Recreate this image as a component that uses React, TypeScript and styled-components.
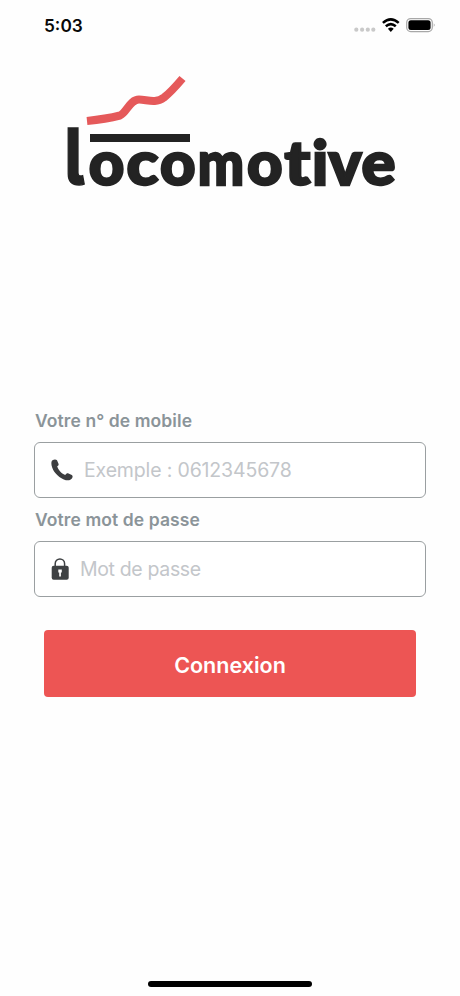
import React from "react";
import styled, { createGlobalStyle } from "styled-components";

const GlobalStyle = createGlobalStyle`
  * { box-sizing: border-box; }
  body { margin: 0; background: #fefefe; font-family: Inter, "Liberation Sans", sans-serif; }
`;

const Screen = styled.main`
  display: flex;
  flex-direction: column;
  width: 460px;
  height: 996px;
  background: #fefefe;
  overflow: hidden;
`;

const StatusBar = styled.header`
  display: flex;
  justify-content: space-between;
  align-items: center;
  height: 50px;
  padding: 0 24px 0 44px;
`;

const Clock = styled.time`
  padding-top: 1px;
  font-size: 17.3px;
  font-weight: 600;
  color: #080808;
`;

const Brand = styled.div`
  height: 170px;
  svg { display: block; }
`;

const Letter = styled.text`
  font-family: Lato, sans-serif;
  font-weight: 900;
  font-size: 61px;
  fill: #232323;
  stroke: #232323;
`;

const TallLetter = styled(Letter)`
  font-family: Inter, sans-serif;
  font-weight: 700;
  font-size: 78px;
  font-feature-settings: "cv05" 1;
`;

const Form = styled.form`
  display: flex;
  flex-direction: column;
  margin-top: 186px;
  padding: 0 34px;
`;

const Label = styled.label`
  height: 30px;
  margin-left: 1px;
  line-height: 30px;
  font-size: 17.5px;
  font-weight: 600;
  letter-spacing: 0.09px;
  color: #8b9499;
  white-space: nowrap;
`;

const Field = styled.div<{ $gap: number }>`
  display: flex;
  align-items: center;
  gap: ${(p) => p.$gap}px;
  height: 56px;
  margin: 6px 0 7px;
  padding-left: 16px;
  border: 1px solid #9a9fa1;
  border-radius: 6px;
  background: #fff;
  svg { flex: none; }
`;

const Input = styled.input<{ $spacing: number }>`
  flex: 1;
  min-width: 0;
  height: 40px;
  padding: 0;
  border: 0;
  outline: 0;
  background: transparent;
  font: 400 19.5px Inter, sans-serif;
  letter-spacing: ${(p) => p.$spacing}px;
  &::placeholder { color: #c3c6ca; opacity: 1; }
`;

const Submit = styled.button`
  height: 67px;
  margin: 26px 10px 0;
  padding: 2px 0 0;
  border: 0;
  border-radius: 4px;
  background: #ed5554;
  color: #fff;
  font: 600 21.5px Inter, sans-serif;
`;

const HomeIndicator = styled.div`
  width: 164px;
  height: 6px;
  margin: auto auto 9px 148px;
  border-radius: 3px;
  background: #000;
`;

function StatusIcons() {
  return (
    <svg width="84" height="20" viewBox="351 15 84 20">
      <g fill="#c9c9c9">
        <circle cx="355.300" cy="29.700" r="2.100" />
        <circle cx="361.100" cy="29.700" r="2.100" />
        <circle cx="366.800" cy="29.700" r="2.100" />
        <circle cx="372.300" cy="29.700" r="2.100" />
      </g>
      <g fill="none" stroke="#000" strokeWidth="2.500">
        <path d="M381.900 22.900Q389.800 15.800 397.700 22.900" />
        <path d="M384.800 26.300Q389.800 22 394.800 26.300" />
      </g>
      <path d="M386.900 28.700Q389.800 26.400 392.700 28.700L389.800 31.900Z" />
      <rect x="405.700" y="18.600" width="25.600" height="13" rx="4" fill="none" stroke="#a8a8a8" strokeWidth="1.200" />
      <rect x="407.400" y="20.300" width="22.200" height="9.600" rx="2.500" />
      <path d="M432.800 23.300q1.800 1.800 0 3.800z" fill="#9b9b9b" />
    </svg>
  );
}

const letters = [
  { char: "o", x: 88.8, width: 1.01 },
  { char: "c", x: 126.6, width: 1.08 },
  { char: "o", x: 160, width: 1.01 },
  { char: "m", x: 197.8, width: 0.9 },
  { char: "o", x: 247, width: 1.01 },
  { char: "t", x: 284.6, width: 1.12 },
  { char: "i", x: 312, width: 1.02 },
  { char: "v", x: 328.6, width: 1.02 },
  { char: "e", x: 361.6, width: 1.04 },
];

function Logo() {
  return (
    <svg width="460" height="170" viewBox="0 50 460 170" role="img" aria-label="locomotive">
      <path
        d="M87 121Q106 119 120 115.500C127 112 130 99.500 139 99.500C147 99.500 155 104 164 97.500C171 92 177 85 182.500 78.500"
        fill="none"
        stroke="#e5595a"
        strokeWidth="8"
      />
      <path d="M90 138H190" stroke="#232323" strokeWidth="8" />
      <TallLetter transform="translate(64 184.800) scale(.86 1)" strokeWidth="1.400">l</TallLetter>
      {letters.map(({ char, x, width }, i) => (
        <Letter key={i} transform={`translate(${x} 184.900) scale(${width} 1)`} strokeWidth="2.400">
          {char}
        </Letter>
      ))}
    </svg>
  );
}

function PhoneIcon() {
  return (
    <svg width="22" height="22" viewBox="0 0 22 22" fill="#3c3d3f">
      <path d="M1.500 1.200C3 .2 5.200.2 6 1.300L7.500 4.800C7.900 5.900 7.500 6.600 6.200 7.300C7 10.700 10.200 14.600 14.200 15.900C15.300 14.500 16.300 14 17.500 14.500L20.800 16C22 16.800 21.800 18.300 20.900 19.500C18.800 21.900 15.900 21.700 12.800 20.400C6.600 17.700 1.700 12.200 .6 6.500C.2 4 .3 2 1.500 1.200Z" />
    </svg>
  );
}

function LockIcon() {
  return (
    <svg width="18" height="22" viewBox="0 0 18 22">
      <path d="M4.200 9V5.800a4.700 4.900 0 0 1 9.400 0V9" fill="none" stroke="#3e4143" strokeWidth="1.500" />
      <rect x=".7" y="7.800" width="17" height="14" rx="2" fill="#3e4143" />
      <path d="M7.300 11.500H10.800V14.500H9.900V18.500H8.200V14.500H7.300Z" fill="#fff" />
    </svg>
  );
}

export default function App() {
  return (
    <Screen>
      <GlobalStyle />
      <StatusBar>
        <Clock>5:03</Clock>
        <StatusIcons />
      </StatusBar>
      <Brand>
        <Logo />
      </Brand>
      <Form onSubmit={(e) => e.preventDefault()}>
        <Label htmlFor="mobile">Votre n° de mobile</Label>
        <Field $gap={11}>
          <PhoneIcon />
          <Input id="mobile" type="tel" placeholder="Exemple : 0612345678" $spacing={-0.15} />
        </Field>
        <Label htmlFor="password">Votre mot de passe</Label>
        <Field $gap={11}>
          <LockIcon />
          <Input id="password" type="password" placeholder="Mot de passe" $spacing={-0.35} />
        </Field>
        <Submit type="submit">Connexion</Submit>
      </Form>
      <HomeIndicator />
    </Screen>
  );
}
